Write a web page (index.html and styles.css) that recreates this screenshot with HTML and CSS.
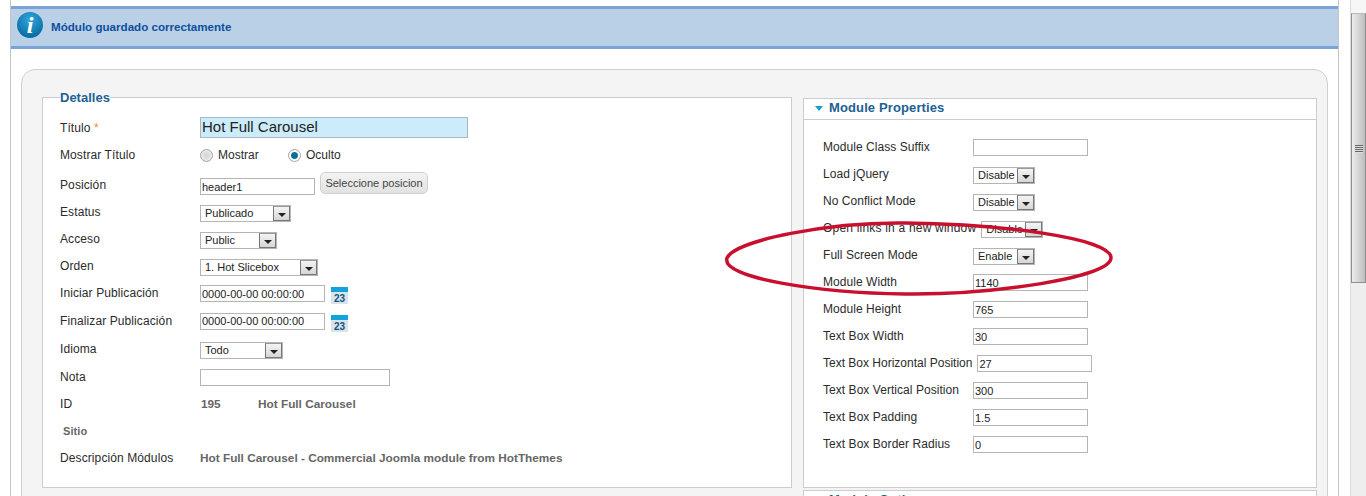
FILE: index.html
```html
<!DOCTYPE html>
<html lang="es">
<head>
<meta charset="utf-8">
<title>Módulo</title>
<link rel="stylesheet" href="styles.css">
</head>
<body>
<div class="page">
  <main class="wrap">
    <div class="msg">
      <span class="info-icon">i</span>
      <span class="msg-text">Módulo guardado correctamente</span>
    </div>
    <div class="card">
      <fieldset class="details">
        <legend>Detalles</legend>
        <div class="row row-title"><span class="flabel flabel-title">Título <span class="req">*</span></span><input class="inp inp-title" value="Hot Full Carousel"></div>
        <div class="row row-radio"><span class="flabel">Mostrar Título</span>
          <span class="radio"></span><span class="rlabel">Mostrar</span>
          <span class="radio radio-on"></span><span>Oculto</span></div>
        <div class="row row-pos"><span class="flabel">Posición</span><input class="inp inp-pos" value="header1"><button class="btn">Seleccione posicion</button></div>
        <div class="row"><span class="flabel">Estatus</span><div class="sel w91"><span class="sel-text">Publicado</span><span class="arrow"></span></div></div>
        <div class="row"><span class="flabel">Acceso</span><div class="sel w77"><span class="sel-text">Public</span><span class="arrow"></span></div></div>
        <div class="row"><span class="flabel">Orden</span><div class="sel w118"><span class="sel-text">1. Hot Slicebox</span><span class="arrow"></span></div></div>
        <div class="row"><span class="flabel">Iniciar Publicación</span><input class="inp inp-date" value="0000-00-00 00:00:00">
          <svg class="cal" viewBox="0 0 17 17"><rect width="17" height="17" fill="#d8e4ea"/><rect width="17" height="5" fill="#12a3d8"/><text x="8.5" y="15" text-anchor="middle" class="cal-num">23</text></svg></div>
        <div class="row row-28"><span class="flabel">Finalizar Publicación</span><input class="inp inp-date" value="0000-00-00 00:00:00">
          <svg class="cal" viewBox="0 0 17 17"><rect width="17" height="17" fill="#d8e4ea"/><rect width="17" height="5" fill="#12a3d8"/><text x="8.5" y="15" text-anchor="middle" class="cal-num">23</text></svg></div>
        <div class="row row-28"><span class="flabel">Idioma</span><div class="sel w83"><span class="sel-text">Todo</span><span class="arrow"></span></div></div>
        <div class="row row-28"><span class="flabel">Nota</span><input class="inp inp-note"></div>
        <div class="row"><span class="flabel">ID</span><span class="val val-id">195</span><span class="val">Hot Full Carousel</span></div>
        <div class="row"><span class="flabel flabel-site">Sitio</span></div>
        <div class="row"><span class="flabel">Descripción Módulos</span><span class="val">Hot Full Carousel - Commercial Joomla module from HotThemes</span></div>
      </fieldset>
      <div class="side">
        <section class="panel panel-main">
          <h3 class="panel-head"><span class="tri"></span>Module Properties</h3>
          <div class="panel-body">
            <div class="prow"><span class="plabel">Module Class Suffix</span><input class="inp inp-p"></div>
            <div class="prow"><span class="plabel">Load jQuery</span><div class="sel w62"><span class="sel-text">Disable</span><span class="arrow"></span></div></div>
            <div class="prow"><span class="plabel">No Conflict Mode</span><div class="sel w62"><span class="sel-text">Disable</span><span class="arrow"></span></div></div>
            <div class="prow"><span class="plabel plabel-loose">Open links in a new window</span><div class="sel w62"><span class="sel-text">Disable</span><span class="arrow"></span></div></div>
            <div class="prow"><span class="plabel">Full Screen Mode</span><div class="sel w62"><span class="sel-text">Enable</span><span class="arrow"></span></div></div>
            <div class="prow"><span class="plabel">Module Width</span><input class="inp inp-p" value="1140"></div>
            <div class="prow"><span class="plabel">Module Height</span><input class="inp inp-p" value="765"></div>
            <div class="prow"><span class="plabel">Text Box Width</span><input class="inp inp-p" value="30"></div>
            <div class="prow"><span class="plabel plabel-tight">Text Box Horizontal Position</span><input class="inp inp-p" value="27"></div>
            <div class="prow"><span class="plabel">Text Box Vertical Position</span><input class="inp inp-p" value="300"></div>
            <div class="prow"><span class="plabel">Text Box Padding</span><input class="inp inp-p" value="1.5"></div>
            <div class="prow"><span class="plabel">Text Box Border Radius</span><input class="inp inp-p" value="0"></div>
          </div>
        </section>
        <section class="panel">
          <h3 class="panel-head"><span class="tri"></span>Module Options</h3>
        </section>
      </div>
    </div>
  </main>
</div>
<aside class="scrollbar">
  <div class="sb-btn"></div>
  <div class="sb-thumb"><span class="sb-grip"></span></div>
</aside>
<svg class="ellipse" viewBox="720 215 400 90" aria-hidden="true">
  <path d="M727 258C735 240 830 222 905 223C1000 224 1112 238 1111 258C1110 278 990 295 905 294C820 293 720 278 727 258Z" fill="none" stroke="#c8102e" stroke-width="3.5"/>
</svg>
</body>
</html>
```
FILE: styles.css
```css
* { box-sizing: border-box; }
html, body { margin: 0; height: 496px; overflow: hidden; }
body {
  display: flex;
  background: #fff;
  color: #2b2b2b;
  font: 12px/15px "Liberation Sans", Arial, sans-serif;
  position: relative;
}
.page { width: 1350px; flex: none; padding-left: 10px; }
.wrap {
  width: 1329px;
  height: 496px;
  border-left: 1px solid #c4c4c4;
  border-right: 1px solid #c4c4c4;
  padding-top: 6px;
  overflow: hidden;
}
.msg {
  height: 43px;
  background: #bad0e6;
  border-top: 3px solid #7ba3d6;
  border-bottom: 3px solid #7ba3d6;
  display: flex;
  align-items: center;
  padding-left: 6px;
}
.info-icon {
  width: 26px;
  height: 26px;
  border-radius: 50%;
  background: radial-gradient(circle at 50% 30%, #2fa8dc, #0a6ea6 75%);
  color: #fff;
  font: italic bold 24px/26px "Liberation Serif", serif;
  text-align: center;
  margin-right: 8px;
  margin-top: -5px;
}
.msg-text { color: #0d4f9f; font-weight: bold; font-size: 11.6px; padding-bottom: 2px; }
.card {
  margin: 20px 10px 0;
  height: 460px;
  background: #f4f4f4;
  border: 1px solid #cfcfcf;
  border-radius: 14px;
  padding: 20px 10px 0 20px;
  display: flex;
  align-items: flex-start;
  gap: 11px;
}
.details {
  margin: 0;
  width: 750px;
  height: 398px;
  flex: none;
  background: #fff;
  border: 1px solid #ccc;
  padding: 8px 0 0 17px;
}
.details legend {
  padding: 0;
  color: #1d6093;
  font-weight: bold;
  font-size: 13px;
  line-height: 15px;
}
.row { display: flex; align-items: center; height: 27px; }
.row-title { height: 28px; }
.row-radio { height: 26px; margin-top: 2px; padding-bottom: 2px; }
.row-pos { height: 30px; padding-top: 3px; }
.row-28 { height: 28px; }
.flabel { width: 140px; flex: none; letter-spacing: .1px; }
.flabel-title { padding-top: 2px; }
.flabel-site { padding-left: 3px; color: #666; font-weight: bold; font-size: 11px; }
.req { color: #e8943c; }
.inp {
  height: 17px;
  border: 1px solid #b5b5b5;
  background: #fff;
  color: #222;
  font: 11px "Liberation Sans", Arial, sans-serif;
  padding: 1px 1px;
  outline: 0;
  margin: 0;
}
.inp-title {
  width: 268px;
  height: 21px;
  background: #ccebfb;
  border-color: #a9b9c4;
  font-size: 15px;
  color: #222;
  padding: 0 1px 2px;
}
.inp-pos { width: 115px; margin-top: 2px; }
.inp-date { width: 125px; margin-right: 6px; }
.inp-note { width: 190px; }
.inp-p { width: 115px; }
.radio {
  width: 13px;
  height: 13px;
  border-radius: 50%;
  border: 1px solid #a5a5a5;
  background: radial-gradient(circle, #d4d4d4, #f2f2f2);
  margin-right: 5px;
}
.rlabel { width: 70px; }
.radio-on {
  background: radial-gradient(circle, #0a6f9c 0 3px, #fff 4px);
}
.btn {
  width: 108px;
  height: 22px;
  margin: -5px 0 0 5px;
  padding: 0;
  border: 1px solid #d0d0d0;
  border-radius: 5px;
  background: linear-gradient(#f3f3f3, #e2e2e2);
  color: #444;
  font: 11px "Liberation Sans", Arial, sans-serif;
}
.sel {
  height: 17px;
  margin-top: 2px;
  display: flex;
  justify-content: space-between;
  align-items: center;
  border: 1px solid #b5b5b5;
  background: #fff;
  font-size: 11px;
  color: #222;
  padding-left: 4px;
}
.sel-text { white-space: nowrap; }
.w62 { width: 62px; }
.w77 { width: 77px; }
.w83 { width: 83px; }
.w91 { width: 91px; }
.w118 { width: 118px; }
.arrow {
  width: 17px;
  height: 15px;
  flex: none;
  border: 1px solid #777;
  border-top-color: #999;
  background: linear-gradient(#f4f4f4, #d6d6d6);
  display: flex;
  align-items: center;
  justify-content: center;
}
.arrow::after {
  content: "";
  margin-top: 3px;
  border: 4px solid transparent;
  border-top: 4px solid #222;
  border-bottom: 0;
}
.val { color: #666; font-weight: bold; font-size: 11.8px; }
.val-id { width: 58px; padding-left: 1px; }
.side { width: 514px; flex: none; padding-top: 8px; }
.panel { background: #fff; border: 1px solid #ccc; margin-bottom: 2px; }
.panel-main { height: 390px; }
.panel-head {
  margin: 0;
  height: 21px;
  padding: 0 0 3px 11px;
  display: flex;
  align-items: center;
  border-bottom: 1px solid #ccc;
  color: #1d6093;
  font-size: 13px;
  line-height: 15px;
  letter-spacing: .12px;
}
.tri {
  margin: 2px 6px 0 0;
  border: 4px solid transparent;
  border-top: 5px solid #14a0cf;
  border-bottom: 0;
}
.panel-body { padding: 14px 0 0 19px; }
.prow { display: flex; align-items: center; height: 27px; }
.plabel { min-width: 145px; margin-right: 5px; white-space: nowrap; letter-spacing: .05px; }
.plabel-loose { letter-spacing: .2px; }
.plabel-tight { letter-spacing: 0; }
.scrollbar {
  width: 16px;
  flex: none;
  height: 496px;
  background: #eee;
  border-left: 1px solid #ddd;
}
.sb-btn { height: 13px; background: #f6f6f6; }
.sb-thumb {
  height: 270px;
  border: 1px solid #8f8f8f;
  border-top-color: #bbb;
  background: linear-gradient(90deg, #ececec, #bdbdbd);
  display: flex;
  justify-content: center;
  padding-top: 131px;
}
.sb-grip {
  width: 8px;
  height: 8px;
  background: repeating-linear-gradient(#666 0 1px, #ddd 1px 2px);
}
.cal { width: 17px; height: 17px; margin-top: 4px; }
.cal-num { font: bold 10px "Liberation Sans", Arial, sans-serif; fill: #14547f; }
.ellipse {
  position: absolute;
  left: 720px;
  top: 215px;
  width: 400px;
  height: 90px;
  pointer-events: none;
}
```
